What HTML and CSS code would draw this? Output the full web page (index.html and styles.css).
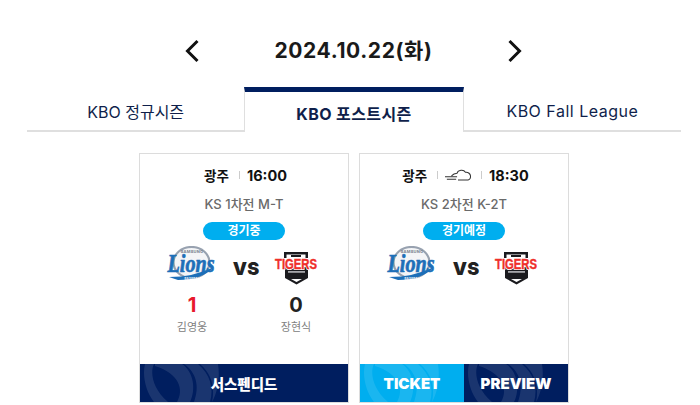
FILE: index.html
```html
<!DOCTYPE html>
<html lang="ko">
<head>
<meta charset="utf-8">
<title>KBO 포스트시즌</title>
<link rel="stylesheet" href="styles.css">
</head>
<body>
<svg class="defs" width="0" height="0" aria-hidden="true">
  <defs>
    <symbol id="lions" viewBox="0 0 50 36">
      <ellipse cx="25.500" cy="16.500" rx="18" ry="15.500" fill="#f4f5f7" stroke="#98a2b0" stroke-width="2.200"/>
      <path d="M3 31 Q28 31 48 21 Q36 34 12 34 Z" fill="#1d6fb8"/>
      <text x="26" y="6.500" class="logo-mini" text-anchor="middle">SAMSUNG</text>
      <text x="27" y="33.500" class="logo-mini logo-mini-b" text-anchor="middle">BASEBALL</text>
      <text x="25" y="26" class="logo-lions" text-anchor="middle" textLength="47" lengthAdjust="spacingAndGlyphs">Lions</text>
    </symbol>
    <symbol id="tigers" viewBox="0 0 44 36">
      <path d="M10 2 H34 V8 H10 Z" fill="#1a1a1e"/>
      <path d="M12.500 4.500 H31.500 V8 H12.500 Z" fill="#fff"/>
      <rect x="17" y="5" width="10" height="2" fill="#1a1a1e"/>
      <path d="M11 17 H34 V28 L22.500 34.500 L11 28 Z" fill="#1a1a1e"/>
      <rect x="14" y="21" width="17" height="1.800" fill="#a5a5aa"/>
      <path d="M17 29 H28 L22.500 32 Z" fill="#fff"/>
      <text x="22" y="18.500" class="logo-tigers-halo" text-anchor="middle" textLength="42" lengthAdjust="spacingAndGlyphs">TIGERS</text>
      <text x="22" y="18.500" class="logo-tigers" text-anchor="middle" textLength="42" lengthAdjust="spacingAndGlyphs">TIGERS</text>
    </symbol>
    <symbol id="swirl" viewBox="0 0 90 38">
      <g fill="#fff">
        <path d="M5 0 H14 C10 8 12 24 28 38 H14 C6 28 2 12 5 0 Z"/>
        <path d="M15 0 H42 C54 8 56 26 50 38 H37 C44 26 40 10 15 2 Z"/>
        <path d="M44 0 H58 C70 10 74 24 70 38 H54 C60 22 56 8 44 0 Z"/>
        <path d="M60 0 H78 C80 12 78 28 72 38 C75 24 72 10 60 0 Z"/>
      </g>
    </symbol>
  </defs>
</svg>
<main class="page">
  <header class="date-bar">
    <button class="arrow" aria-label="이전">
      <svg width="14" height="24" viewBox="0 0 14 24"><path d="M12.500 2 L2.500 12 L12.500 22" fill="none" stroke="#111" stroke-width="3"/></svg>
    </button>
    <h1 class="date">2024.10.22(화)</h1>
    <button class="arrow" aria-label="다음">
      <svg width="14" height="24" viewBox="0 0 14 24"><path d="M1.500 2 L11.500 12 L1.500 22" fill="none" stroke="#111" stroke-width="3"/></svg>
    </button>
  </header>
  <nav class="tabs">
    <a class="tab">KBO 정규시즌</a>
    <a class="tab tab-active">KBO 포스트시즌</a>
    <a class="tab tab-latin">KBO Fall League</a>
  </nav>
  <section class="cards">
    <article class="card">
      <div class="card-head">
        <strong class="place">광주</strong><i class="sep"></i><strong class="time">16:00</strong>
      </div>
      <p class="round">KS 1차전 M-T</p>
      <span class="status">경기중</span>
      <div class="teams">
        <svg class="logo-sl"><use href="#lions"/></svg>
        <span class="vs">VS</span>
        <svg class="logo-ht"><use href="#tigers"/></svg>
      </div>
      <div class="scores">
        <div class="score-col"><b class="score score-win">1</b><span class="pitcher">김영웅</span></div>
        <div class="score-col"><b class="score">0</b><span class="pitcher">장현식</span></div>
      </div>
      <div class="actions">
        <a class="action action-navy action-ko"><svg class="swirl"><use href="#swirl"/></svg><span>서스펜디드</span></a>
      </div>
    </article>
    <article class="card">
      <div class="card-head">
        <strong class="place">광주</strong><i class="sep"></i>
        <svg class="weather" width="26" height="14" viewBox="0 0 28 14"><path d="M7 8 C9 5.500 11 5 13 5 C14 1.500 20 0.500 22 4 C25 3.500 27.500 6 27.500 8.500 C27.500 11 25.500 12.500 23 12.500 H14 M0 9 H13 M2 11.500 H12" fill="none" stroke="#333" stroke-width="1.100"/></svg>
        <i class="sep"></i><strong class="time">18:30</strong>
      </div>
      <p class="round">KS 2차전 K-2T</p>
      <span class="status">경기예정</span>
      <div class="teams">
        <svg class="logo-sl"><use href="#lions"/></svg>
        <span class="vs">VS</span>
        <svg class="logo-ht"><use href="#tigers"/></svg>
      </div>
      <div class="actions">
        <a class="action action-sky"><svg class="swirl"><use href="#swirl"/></svg><span>TICKET</span></a>
        <a class="action action-navy"><svg class="swirl"><use href="#swirl"/></svg><span>PREVIEW</span></a>
      </div>
    </article>
  </section>
</main>
</body>
</html>
```

FILE: styles.css
```css
* { box-sizing: border-box; }
html, body { margin: 0; padding: 0; background: #fff; }
body {
  width: 700px;
  height: 405px;
  overflow: hidden;
  font-family: Inter, "Noto Sans CJK KR", "Liberation Sans", sans-serif;
  color: #111;
}
.defs { display: block; height: 0; }
.page { padding-top: 35px; }
.date-bar {
  display: flex;
  align-items: center;
  justify-content: center;
  gap: 76px;
  height: 32px;
  padding-left: 7px;
}
.arrow {
  display: flex;
  border: 0;
  padding: 0;
  background: none;
}
.date {
  margin: 0;
  font-size: 21px;
  font-weight: 700;
  line-height: 32px;
  letter-spacing: 0.6px;
  color: #1a1a1a;
  white-space: nowrap;
}
.tabs {
  display: flex;
  margin: 20px 0 0 27px;
  width: 654px;
  height: 45px;
}
.tab {
  flex: 1;
  display: flex;
  align-items: center;
  justify-content: center;
  padding-top: 5px;
  font-size: 16px;
  color: #0f1f4b;
  border-bottom: 2px solid #dfdfdf;
}
.tab-latin { letter-spacing: 0.5px; }
.tab-active {
  font-weight: 700;
  letter-spacing: 0.4px;
  border-top: 5px solid #001e5f;
  border-left: 1px solid #dfdfdf;
  border-right: 1px solid #dfdfdf;
  border-bottom: 0;
  padding-top: 1px;
}
.cards {
  display: flex;
  gap: 10px;
  margin: 21px 0 0 139px;
}
.card {
  display: flex;
  flex-direction: column;
  align-items: center;
  width: 210px;
  height: 250px;
  border: 1px solid #dcdcdc;
}
.card-head {
  display: flex;
  align-items: center;
  justify-content: center;
  height: 20px;
  margin-top: 11px;
  padding-left: 3px;
  color: #111;
}
.place { font-size: 13.500px; font-weight: 700; }
.time { font-size: 14.500px; font-weight: 700; }
.sep { width: 1px; height: 8px; margin: 0 7px 0 10px; background: #ccc; }
.weather { display: block; }
.round {
  margin: 10px 0 0;
  font-size: 13px;
  line-height: 18px;
  font-weight: 500;
  color: #6a6a6a;
}
.status {
  width: 82px;
  height: 18px;
  margin-top: 9px;
  border-radius: 9px;
  background: #00aeef;
  color: #fff;
  font-size: 12px;
  font-weight: 700;
  line-height: 18px;
  text-align: center;
}
.teams {
  display: flex;
  align-items: center;
  justify-content: space-between;
  width: 100%;
  height: 36px;
  margin-top: 6px;
  padding: 0 30px 0 26px;
}
.logo-sl { width: 50px; height: 36px; flex: none; }
.logo-ht { width: 44px; height: 36px; flex: none; margin-top: 8px; }
.vs {
  margin: 8px 0 0 2px;
  font-size: 18px;
  font-weight: 900;
  color: #222;
}
.logo-mini { font: 700 4px Inter, sans-serif; fill: #77808c; letter-spacing: 0.2px; }
.logo-mini-b { font-size: 3px; fill: #fff; }
.logo-lions {
  font: italic 700 25px "Liberation Serif", serif;
  fill: #1d6fb8;
  stroke: #1d6fb8;
  stroke-width: 0.7px;
}
.logo-tigers-halo {
  font: 700 14px "Liberation Sans", sans-serif;
  fill: #fff;
  stroke: #fff;
  stroke-width: 2px;
}
.logo-tigers {
  font: 700 14px "Liberation Sans", sans-serif;
  fill: #ef2f2a;
  stroke: #ef2f2a;
  stroke-width: 0.4px;
}
.scores {
  display: grid;
  grid-template-columns: 1fr 1fr;
  width: 100%;
  margin-top: 11px;
}
.score-col {
  display: flex;
  flex-direction: column;
  align-items: center;
}
.score {
  font-size: 20px;
  font-weight: 700;
  line-height: 24px;
  color: #222;
}
.score-win { color: #e8192c; }
.pitcher {
  margin-top: 1px;
  font-size: 11px;
  line-height: 18px;
  color: #808080;
}
.actions {
  display: flex;
  width: 100%;
  height: 38px;
  margin-top: auto;
}
.action {
  position: relative;
  flex: 1;
  display: flex;
  align-items: center;
  justify-content: center;
  overflow: hidden;
  color: #fff;
  font-size: 15px;
  font-weight: 900;
}
.action-ko { font-size: 14.500px; }
.action span { position: relative; }
.action-navy { background: #001e5f; }
.action-sky { background: #00aeef; }
.swirl {
  position: absolute;
  left: 0;
  top: 0;
  width: 90px;
  height: 38px;
  opacity: 0.1;
}
```
